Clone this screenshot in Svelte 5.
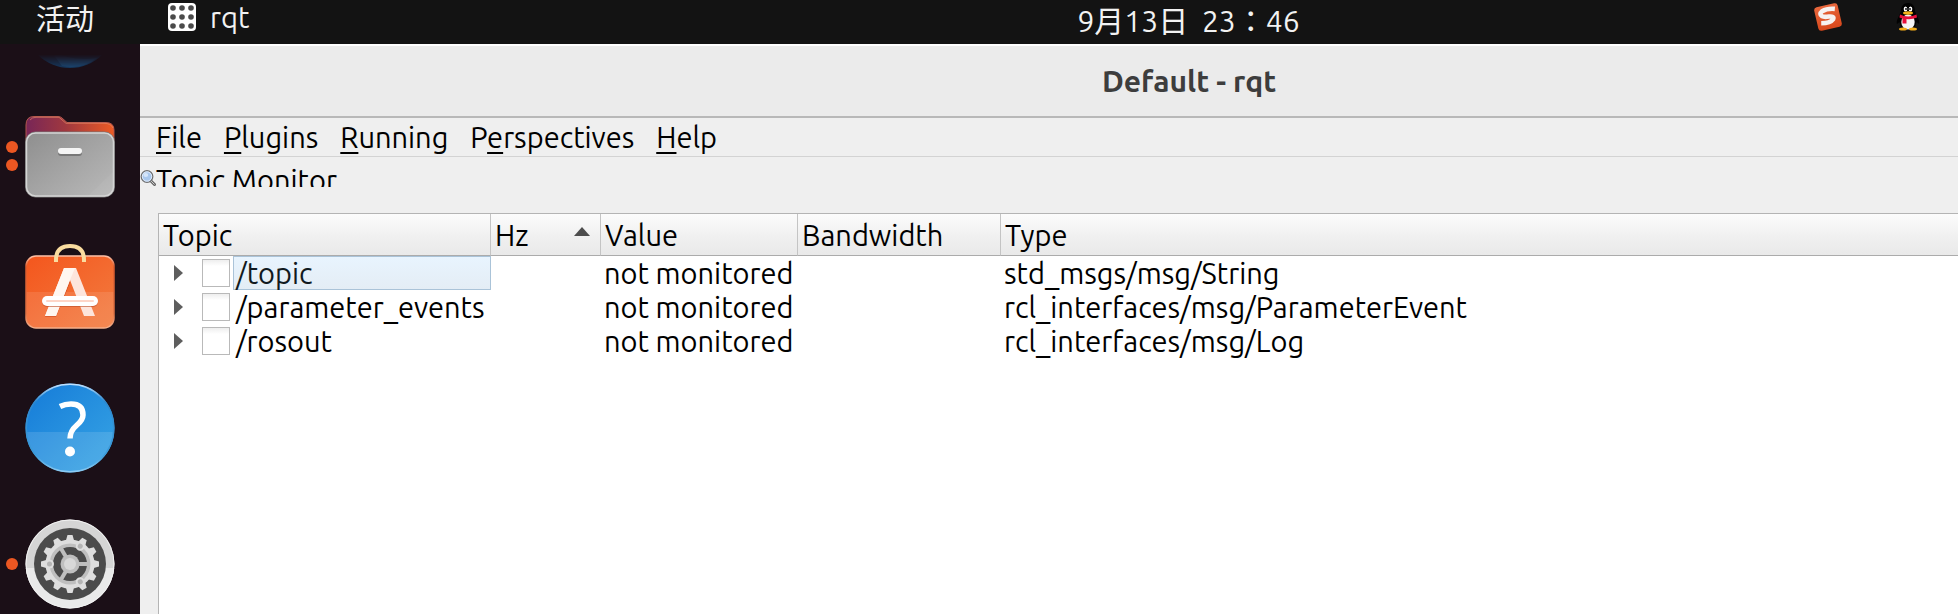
<script>
  const menus = [
    ['', 'F', 'ile'],
    ['', 'P', 'lugins'],
    ['', 'R', 'unning'],
    ['P', 'e', 'rspectives'],
    ['', 'H', 'elp']
  ];
  const columns = ['Topic', 'Hz', 'Value', 'Bandwidth', 'Type'];
  const topics = [
    { name: '/topic', value: 'not monitored', type: 'std_msgs/msg/String', selected: true },
    { name: '/parameter_events', value: 'not monitored', type: 'rcl_interfaces/msg/ParameterEvent', selected: false },
    { name: '/rosout', value: 'not monitored', type: 'rcl_interfaces/msg/Log', selected: false }
  ];
  const grid = [5, 14, 23];
  const teeth = Array.from({ length: 12 }, (_, i) => i * 30);
</script>

<div class="desktop">
  <header class="topbar">
    <div class="left">
      <button class="activities">活动</button>
      <button class="appmenu">
        <svg width="28" height="28" viewBox="0 0 28 28" aria-hidden="true">
          <rect width="28" height="28" rx="4" fill="#fff" />
          {#each grid as y}
            {#each grid as x}
              <circle cx={x} cy={y} r="2.8" fill="#4a4a4a" />
            {/each}
          {/each}
        </svg>
        <span>rqt</span>
      </button>
    </div>
    <time class="clock">9月13日&nbsp; 23：46</time>
    <div class="tray">
      <button aria-label="Input method">
        <svg width="28" height="28" viewBox="0 0 28 28">
          <defs>
            <linearGradient id="sg" x1="0" y1="0" x2="0" y2="1">
              <stop offset="0" stop-color="#e8673c" /><stop offset="1" stop-color="#d8481c" />
            </linearGradient>
          </defs>
          <g transform="rotate(-13 14 14)">
            <rect x="2" y="2" width="24" height="24" rx="3" fill="url(#sg)" />
            <path d="M22.500 7.600Q15 5.200 9.600 7Q5.600 9 8.500 12Q10 13.300 15 13.800Q20.500 14.500 18.500 17.300Q15 20.500 6 18.500" fill="none" stroke="#f6f2f1" stroke-width="4.600" />
          </g>
        </svg>
      </button>
      <button aria-label="Messenger">
        <svg width="24" height="28" viewBox="0 0 24 28">
          <path d="M12 0C7.500 0 5 3 5 8.500L2.500 14Q0 18.500 1 21L3.500 19L5 24H19L20.500 19L23 21Q24 18.500 21.500 14L19 8.500C19 3 16.500 0 12 0Z" fill="#020202" />
          <ellipse cx="12" cy="19" rx="6.700" ry="7.500" fill="#f4f4f4" />
          <ellipse cx="9.500" cy="6" rx="1.800" ry="2.500" fill="#fff" />
          <ellipse cx="14.500" cy="6" rx="1.800" ry="2.500" fill="#fff" />
          <circle cx="10" cy="6" r=".9" /><circle cx="14" cy="6" r=".9" />
          <ellipse cx="12" cy="10" rx="5" ry="1.700" fill="#f6b21c" />
          <path d="M4 11.500Q12 15.500 20.500 11.500L21 14.500Q15 17 10.500 16V20.500H6.500V15.500L3.500 14.500Z" fill="#e6103c" />
          <ellipse cx="7" cy="26" rx="4" ry="1.600" fill="#f3ad1a" />
          <ellipse cx="17" cy="26" rx="4" ry="1.600" fill="#f3ad1a" />
        </svg>
      </button>
    </div>
  </header>

  <div class="workspace">
    <nav class="dock" aria-label="Dock">
      <ul>
        <li class="fading">
          <span class="dots"></span>
          <button aria-label="Mail">
            <svg width="96" height="96" viewBox="0 0 96 96">
              <circle cx="48" cy="50" r="46" fill="#12548e" />
              <path d="M28 78Q50 90 75 86Q60 98 40 94Z" fill="#1c6db0" />
            </svg>
          </button>
        </li>
        <li>
          <span class="dots"><i></i><i></i></span>
          <button aria-label="Files">
            <svg width="96" height="96" viewBox="0 0 96 96">
              <defs>
                <linearGradient id="fb" x1="0" y1="0" x2="1" y2="0">
                  <stop offset="0" stop-color="#782657" /><stop offset=".45" stop-color="#a0383f" /><stop offset="1" stop-color="#ec5b25" />
                </linearGradient>
                <linearGradient id="ff" x1="0" y1="0" x2="1" y2="1">
                  <stop offset="0" stop-color="#8e8e8e" /><stop offset="1" stop-color="#bababa" />
                </linearGradient>
              </defs>
              <path d="M4 40V17Q4 8.500 12 8.500H36Q38.500 8.500 40 10L45 14.500H84Q92 14.500 92 22V48H4Z" fill="url(#fb)" stroke="#b2574d" stroke-width="1" />
              <path d="M8 12Q10 9.300 14 9.300H37L44 15.300H82Q89 15.300 91 20" fill="none" stroke="#e88a67" stroke-opacity=".65" />
              <rect x="3.500" y="24" width="89" height="65" rx="10" fill="url(#ff)" stroke="#777" />
              <rect x="4.500" y="25" width="87" height="63" rx="9" fill="none" stroke="#d4d4d4" stroke-width="1.500" />
              <path d="M91 64L66 88H82Q91 88 91 79Z" fill="#fff" fill-opacity=".05" />
              <rect x="36" y="42" width="24" height="6" rx="3" fill="#777" />
              <rect x="36" y="40" width="24" height="6" rx="3" fill="#f4f4f4" />
            </svg>
          </button>
        </li>
        <li>
          <span class="dots"></span>
          <button aria-label="Software">
            <svg width="96" height="96" viewBox="0 0 96 96">
              <defs>
                <linearGradient id="sw" x1="0" y1="0" x2="1" y2="1">
                  <stop offset="0" stop-color="#f4561d" /><stop offset="1" stop-color="#f27c40" />
                </linearGradient>
                <linearGradient id="rim" x1="0" y1="0" x2="0" y2="1">
                  <stop offset="0" stop-color="#ffc3aa" /><stop offset=".15" stop-color="#d95a2c" /><stop offset=".8" stop-color="#dc7144" /><stop offset="1" stop-color="#f6b08b" />
                </linearGradient>
              </defs>
              <rect x="4" y="12" width="88" height="72" rx="10" fill="url(#sw)" />
              <path d="M4 48H92V75Q92 84 82 84H14Q4 84 4 75Z" fill="#fff" fill-opacity=".1" />
              <rect x="4" y="12" width="88" height="72" rx="10" fill="none" stroke="url(#rim)" stroke-width="1.500" />
              <path d="M34 18V16Q34 2 48 2Q62 2 62 16V18" fill="none" stroke="#fadc9f" stroke-width="4" stroke-linecap="butt" />
              <path d="M23 73H34L48 39V25H42Z" fill="#cc4a20" fill-opacity=".6" />
              <path d="M23 72H34L48 36L62 72H73L54 24H42Z" fill="#fde5dc" />
              <path d="M23 72H34L48 36L53 24H42Z" fill="#fff6f0" />
              <rect x="20" y="53" width="56" height="10" rx="5" fill="#bc4c26" fill-opacity=".6" />
              <rect x="20" y="52" width="56" height="10" rx="5" fill="#fff" />
              <rect x="24" y="56" width="48" height="2" rx="1" fill="#fdd5c7" />
            </svg>
          </button>
        </li>
        <li>
          <span class="dots"></span>
          <button aria-label="Help">
            <svg width="96" height="96" viewBox="0 0 96 96">
              <defs>
                <linearGradient id="hb" x1="0" y1="0" x2="1" y2="1">
                  <stop offset="0" stop-color="#157bd8" /><stop offset="1" stop-color="#37a5e5" />
                </linearGradient>
                <linearGradient id="hr" x1="0" y1="0" x2="0" y2="1">
                  <stop offset="0" stop-color="#bfe1ff" /><stop offset=".2" stop-color="#2f88cd" /><stop offset=".8" stop-color="#3b9ad8" /><stop offset="1" stop-color="#8dccf3" />
                </linearGradient>
              </defs>
              <circle cx="48" cy="48" r="44.500" fill="url(#hb)" />
              <path d="M3.700 52H92.300A44.500 44.500 0 0 1 3.700 52Z" fill="#fff" fill-opacity=".12" />
              <circle cx="48" cy="48" r="43.800" fill="none" stroke="url(#hr)" stroke-width="1.500" />
              <path d="M38 26.500Q43 24 49 24Q61 24 61 35Q61 40 54.500 45.500Q48 51 48 58.500" fill="none" stroke="#fff" stroke-width="5.500" />
              <circle cx="48" cy="71.500" r="5" fill="#fff" />
            </svg>
          </button>
        </li>
        <li>
          <span class="dots"><i></i></span>
          <button aria-label="Settings">
            <svg width="96" height="96" viewBox="0 0 96 96">
              <circle cx="48" cy="48" r="44.500" fill="#d5d5d5" />
              <path d="M3.700 52H92.300A44.500 44.500 0 0 1 3.700 52Z" fill="#e9e9e9" />
              <circle cx="48" cy="48" r="44" fill="none" stroke="#f1f1f1" stroke-width="1" />
              <circle cx="48" cy="48" r="36" fill="#4b4b4b" />
              {#each teeth as a}
                <path d="M43.500 26L45.500 19H50.500L52.500 26Z" fill="#dedede" transform="rotate({a} 48 48)" />
              {/each}
              <circle cx="48" cy="48" r="24.500" fill="#dedede" />
              <circle cx="48" cy="48" r="20.500" fill="#bfbfbf" />
              <circle cx="48" cy="48" r="17" fill="#4b4b4b" />
              {#each [0, 120, 240] as a}
                <path d="M56 48H66" stroke="#bfbfbf" stroke-width="4" transform="rotate({a} 48 48)" />
                <g transform="rotate({a} 48 48)">
                  <circle cx="27.500" cy="48" r="4.500" fill="#dedede" />
                  <circle cx="27.500" cy="48" r="2.500" fill="#b4b4b4" />
                </g>
              {/each}
              <circle cx="48" cy="48" r="9.500" fill="#bfbfbf" />
              <circle cx="48" cy="48" r="6" fill="#d8d8d8" />
            </svg>
          </button>
        </li>
      </ul>
    </nav>

    <main class="window">
      <h1>Default - rqt</h1>
      <div class="menubar">
        {#each menus as [before, key, after]}
          <button>{before}<u>{key}</u>{after}</button>
        {/each}
      </div>
      <section class="panel">
        <div class="panel-title">
          <svg width="16" height="18" viewBox="0 0 16 18" aria-hidden="true">
            <path d="M10.500 11.500L14.500 15.500" stroke="#666" stroke-width="3" stroke-linecap="round" />
            <path d="M11 12L14.300 15.300" stroke="#ccc" stroke-width="1" stroke-linecap="round" />
            <circle cx="7" cy="7.500" r="5.800" fill="#a9c8ee" stroke="#707070" stroke-width="1.300" />
            <circle cx="7" cy="7.500" r="4.700" fill="none" stroke="#e6eefa" stroke-width=".9" />
            <ellipse cx="5.800" cy="6" rx="2.400" ry="2" fill="#d6e6fa" />
          </svg>
          <h2>Topic Monitor</h2>
        </div>
        <div class="tree">
          <table>
            <colgroup>
              <col class="c-topic" /><col class="c-hz" /><col class="c-value" /><col class="c-band" /><col />
            </colgroup>
            <thead>
              <tr>
                {#each columns as column}
                  <th scope="col">
                    <button>
                      {column}
                      {#if column === 'Hz'}
                        <svg width="16" height="9" viewBox="0 0 16 9" aria-hidden="true"><path d="M8 0L16 9H0Z" fill="#4d4d4d" /></svg>
                      {/if}
                    </button>
                  </th>
                {/each}
              </tr>
            </thead>
            <tbody>
              {#each topics as topic, i}
                <tr>
                  <td>
                    <div class="node">
                      <button class="expand" aria-label="Expand {topic.name}">
                        <svg width="9" height="16" viewBox="0 0 9 16"><path d="M0 0L9 8L0 16Z" fill="#5e5e5e" /></svg>
                      </button>
                      <input type="checkbox" id="monitor-{i}" />
                      <label for="monitor-{i}" class:selected={topic.selected}>{topic.name}</label>
                    </div>
                  </td>
                  <td></td>
                  <td>{topic.value}</td>
                  <td></td>
                  <td>{topic.type}</td>
                </tr>
              {/each}
            </tbody>
          </table>
        </div>
      </section>
    </main>
  </div>
</div>

<style>
  :global(body) {
    margin: 0;
  }
  .desktop {
    display: flex;
    flex-direction: column;
    height: 100vh;
    overflow: hidden;
    font: 29px/34px 'Ubuntu', 'Noto Sans', 'Noto Sans CJK SC', sans-serif;
    color: #000;
  }
  button {
    padding: 0;
    border: 0;
    background: none;
    font: inherit;
    color: inherit;
    text-align: left;
  }
  svg {
    display: block;
    flex: none;
  }
  .topbar {
    display: grid;
    grid-template-columns: 18fr auto 11fr;
    flex: none;
    height: 44px;
    background: #131313;
    color: #f2f2f2;
  }
  .left,
  .appmenu,
  .tray {
    display: flex;
    align-items: flex-start;
  }
  .left {
    padding-left: 36px;
    gap: 74px;
  }
  .activities {
    padding-top: 2px;
  }
  .appmenu {
    gap: 14px;
  }
  .appmenu svg {
    margin-top: 3px;
  }
  .clock {
    padding-top: 4px;
    font-family: 'Ubuntu', 'Noto Sans', 'Noto Sans CJK TC', sans-serif;
    font-size: 30px;
    white-space: nowrap;
  }
  .tray {
    justify-content: flex-end;
    gap: 54px;
    padding: 3px 38px 0 0;
  }
  .workspace {
    display: flex;
    flex: 1;
    min-height: 0;
  }
  .dock {
    flex: none;
    width: 140px;
    overflow: hidden;
    background: #1b0f17;
  }
  .dock ul {
    display: flex;
    flex-direction: column;
    gap: 40px;
    margin: -76px 0 0;
    padding: 0;
    list-style: none;
  }
  .dock li {
    display: flex;
    align-items: center;
    gap: 4px;
    padding-left: 6px;
  }
  .fading {
    margin-top: 4px;
    mask-image: linear-gradient(transparent 86%, rgb(0 0 0 / 60%) 100%);
  }
  .dots {
    display: flex;
    flex-direction: column;
    gap: 6px;
    width: 12px;
  }
  .dots i {
    height: 12px;
    border-radius: 50%;
    background: #ec5722;
  }
  .window {
    display: flex;
    flex: 1;
    flex-direction: column;
    min-width: 0;
    background: #efefef;
  }
  h1 {
    margin: 0;
    padding: 18px 0 18px 280px;
    border-top: 2px solid #fff;
    border-bottom: 2px solid #b8b8b8;
    background: #ebebeb;
    color: #3d3d3d;
    font-size: 30px;
    line-height: 34px;
    text-align: center;
  }
  .menubar {
    display: flex;
    gap: 22px;
    padding: 2px 16px;
    border-bottom: 1px solid #d3d3d3;
  }
  u {
    text-decoration-thickness: 2px;
    text-underline-offset: 4px;
    text-decoration-skip-ink: none;
  }
  .panel {
    display: flex;
    flex: 1;
    flex-direction: column;
    min-height: 0;
    padding-top: 6px;
  }
  .panel-title {
    display: flex;
    align-items: flex-end;
    height: 24px;
    overflow: hidden;
  }
  h2 {
    align-self: flex-start;
    margin: 0;
    font-size: 29px;
    font-weight: 400;
    line-height: 34px;
  }
  .tree {
    flex: 1;
    margin: 26px 0 0 18px;
    border: solid #b4b4b4;
    border-width: 1px 0 0 1px;
    background: #fff;
  }
  table {
    width: 100%;
    table-layout: fixed;
    border-collapse: separate;
    border-spacing: 0;
  }
  .c-topic {
    width: 332px;
  }
  .c-hz {
    width: 110px;
  }
  .c-value {
    width: 197px;
  }
  .c-band {
    width: 203px;
  }
  th {
    height: 41px;
    padding: 0 10px 0 4px;
    border-right: 1px solid #c4c4c4;
    border-bottom: 1px solid #ababab;
    background: linear-gradient(#fcfcfc, #f0f0f0 55%, #e9e9e9);
    font-weight: 400;
  }
  th:last-child {
    border-right: 0;
  }
  th button {
    display: flex;
    justify-content: space-between;
    width: 100%;
  }
  th svg {
    margin-top: 9px;
  }
  td {
    height: 34px;
    padding: 0 0 0 3px;
    white-space: nowrap;
  }
  td:first-child {
    padding: 0;
  }
  .node {
    display: flex;
    align-items: center;
    padding-left: 15px;
  }
  .expand {
    width: 28px;
  }
  input {
    appearance: none;
    box-sizing: border-box;
    flex: none;
    width: 28px;
    height: 28px;
    margin: 0 3px 0 0;
    border: 1px solid #b9b9b9;
    background: linear-gradient(#eee, #fff 6px);
  }
  label {
    flex: 1;
    box-sizing: border-box;
    height: 34px;
    border: 1px solid transparent;
    padding-left: 2px;
    line-height: 32px;
  }
  .selected {
    border-color: #aac3d8;
    background: linear-gradient(#e8f4fe, #e4edf5);
    color: #111a20;
  }
</style>
